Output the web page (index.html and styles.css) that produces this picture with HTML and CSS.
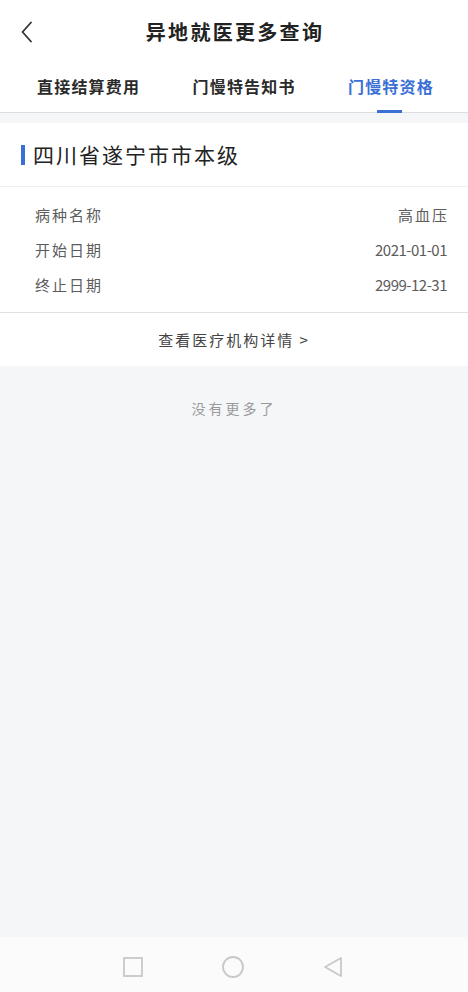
FILE: index.html
```html
<!DOCTYPE html>
<html lang="zh-CN">
<head>
<meta charset="utf-8">
<title>异地就医更多查询</title>
<link rel="stylesheet" href="styles.css">
</head>
<body>
<div class="page">
  <header class="topbar">
    <div class="back">
      <svg width="14" height="22" viewBox="0 0 14 22"><path d="M11 1.5 L2.5 11 L11 20.5" fill="none" stroke="#333" stroke-width="1.8" stroke-linecap="round" stroke-linejoin="round"/></svg>
    </div>
    <h1 class="title">异地就医更多查询</h1>
    <div class="spacer"></div>
  </header>
  <nav class="tabs">
    <span class="tab">直接结算费用</span>
    <span class="tab">门慢特告知书</span>
    <span class="tab active">门慢特资格</span>
  </nav>
  <main class="content">
    <section class="card">
      <div class="card-head"><span class="mark"></span><span class="region">四川省遂宁市市本级</span></div>
      <div class="rows">
        <div class="row"><span class="label">病种名称</span><span class="value">高血压</span></div>
        <div class="row"><span class="label">开始日期</span><span class="value num">2021-01-01</span></div>
        <div class="row"><span class="label">终止日期</span><span class="value num">2999-12-31</span></div>
      </div>
      <div class="link">查看医疗机构详情 &gt;</div>
    </section>
    <p class="nomore">没有更多了</p>
  </main>
  <footer class="sysnav">
    <svg width="22" height="22" viewBox="0 0 22 22"><rect x="2" y="2" width="18" height="18" fill="none" stroke="#c8c8c8" stroke-width="1.8"/></svg>
    <svg width="24" height="24" viewBox="0 0 24 24"><circle cx="12" cy="12" r="10" fill="none" stroke="#c8c8c8" stroke-width="1.8"/></svg>
    <svg width="22" height="22" viewBox="0 0 22 22"><path d="M19 2 L19 20 L3 11 Z" fill="none" stroke="#c8c8c8" stroke-width="1.8" stroke-linejoin="round"/></svg>
  </footer>
</div>
</body>
</html>
```
FILE: styles.css
```css
* { box-sizing: border-box; }
html, body { margin: 0; padding: 0; }
body {
  font-family: "Noto Sans CJK SC", "Noto Sans", sans-serif;
  background: #f5f6f8;
  color: #222;
}
.page {
  width: 468px;
  height: 992px;
  display: flex;
  flex-direction: column;
}
.topbar {
  height: 62px;
  background: #fff;
  display: grid;
  grid-template-columns: 60px 1fr 60px;
  align-items: center;
}
.back {
  padding-left: 20px;
  padding-top: 2px;
  display: flex;
  align-items: center;
}
.title {
  margin: 0;
  text-align: center;
  font-size: 20px;
  font-weight: 700;
  letter-spacing: 2.3px;
  color: #222;
  padding-left: 2px;
}
.tabs {
  height: 51px;
  background: #fff;
  display: flex;
  justify-content: space-between;
  align-items: center;
  padding: 0 34px 2px 37px;
  border-bottom: 1px solid #dcdde1;
}
.tab {
  position: relative;
  font-size: 16px;
  font-weight: 700;
  letter-spacing: 1.2px;
  color: #2a2a2a;
  line-height: 24px;
}
.tab.active { color: #3a6fd6; }
.tab.active::after {
  content: "";
  position: absolute;
  left: 50%;
  margin-left: -14px;
  bottom: -15px;
  width: 25px;
  height: 3px;
  background: #3a6fd6;
}
.content {
  flex: 1;
  padding-top: 10px;
}
.card {
  background: #fff;
}
.card-head {
  height: 64px;
  display: flex;
  align-items: center;
  padding-left: 21px;
  border-bottom: 1px solid #eeeff1;
}
.mark {
  width: 4px;
  height: 20px;
  background: #3a6fd6;
  margin-right: 8px;
}
.region {
  font-size: 21px;
  letter-spacing: 2px;
  color: #222;
  padding-bottom: 1px;
}
.rows {
  padding: 10px 21px 10px 35px;
  border-bottom: 1px solid #e0e1e4;
}
.row {
  height: 35px;
  display: flex;
  justify-content: space-between;
  align-items: center;
  font-size: 15px;
  color: #5c5c5c;
}
.label { letter-spacing: 2px; }
.value { letter-spacing: 2px; margin-right: -2px; }
.value.num { letter-spacing: -0.5px; margin-right: 0; }
.link {
  height: 53px;
  display: flex;
  align-items: center;
  justify-content: center;
  font-size: 15px;
  letter-spacing: 2px;
  color: #444;
}
.nomore {
  margin: 0;
  padding-top: 31px;
  text-align: center;
  font-size: 14px;
  letter-spacing: 3px;
  color: #9a9a9a;
  line-height: 22px;
}
.sysnav {
  height: 55px;
  background: #fbfbfc;
  display: flex;
  align-items: center;
  justify-content: center;
  gap: 77px;
  padding: 4px 2px 0 0;
}
```
